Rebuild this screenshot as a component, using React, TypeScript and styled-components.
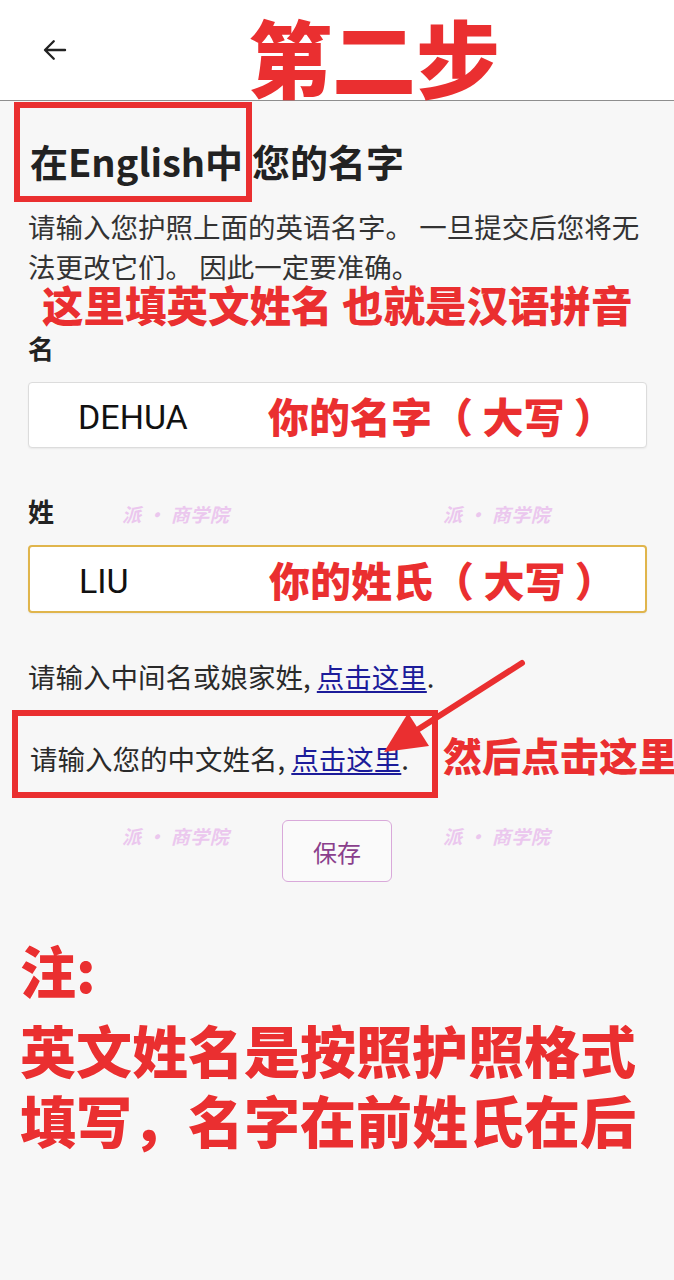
import React from "react";
import styled, { createGlobalStyle } from "styled-components";

const RED = "#ea2f30";

const Global = createGlobalStyle`
  html, body {
    margin: 0;
    padding: 0;
    background: #f7f7f7;
    overflow-x: hidden;
  }
  body {
    font-family: "Noto Sans CJK SC", "Noto Sans", sans-serif;
    color: #2a2a2a;
  }
`;

const Page = styled.div`
  position: relative;
  width: 674px;
  min-height: 1280px;
  overflow: hidden;
  background: #f7f7f7;
`;

const TopBar = styled.header`
  height: 100px;
  background: #ffffff;
  border-bottom: 1px solid #8e8e8e;
  display: flex;
  align-items: center;
  padding-left: 40px;
`;

const BackButton = styled.button`
  border: none;
  background: none;
  padding: 0;
  width: 30px;
  height: 30px;
  display: flex;
  align-items: center;
  justify-content: center;
  color: #222;
`;

const Title = styled.h1`
  margin: 0 0 0 178px;
  padding-top: 12px;
  font-size: 84px;
  line-height: 86px;
  font-weight: 900;
  color: ${RED};
  white-space: nowrap;
`;

const Content = styled.main`
  padding: 0 28px;
  display: flex;
  flex-direction: column;
`;

const Heading = styled.h2`
  margin: 1px 0 0;
  display: flex;
  align-items: stretch;
  font-size: 38px;
  line-height: 46px;
  font-weight: 600;
  color: #222;
`;

const Highlight = styled.span`
  margin-left: -14px;
  border: 6px solid ${RED};
  padding: 30px 3px 12px 10px;
  white-space: nowrap;
`;

const HeadingRest = styled.span`
  padding-top: 36px;
`;

const Intro = styled.p`
  margin: 4px -10px 0 0;
  font-size: 27.5px;
  line-height: 40px;
  color: #333;
`;

const Callout = styled.div<{ $size: number; $indent?: number; $lh?: number }>`
  font-size: ${(p) => p.$size}px;
  line-height: ${(p) => p.$lh ?? p.$size + 1}px;
  font-weight: 900;
  color: ${RED};
  white-space: nowrap;
  margin-left: ${(p) => p.$indent ?? 0}px;
  text-shadow: 0 0 2px #fff;
`;

const Label = styled.div<{ $gap: number }>`
  margin-top: ${(p) => p.$gap}px;
  font-size: 26px;
  line-height: 36px;
  font-weight: 700;
  color: #222;
`;

const Field = styled.div<{ $focused?: boolean }>`
  margin-top: 16px;
  height: ${(p) => (p.$focused ? 68 : 66)}px;
  box-sizing: border-box;
  background: #fff;
  border: ${(p) => (p.$focused ? "2px solid #e0b54c" : "1px solid #dcdcdc")};
  border-radius: 4px;
  box-shadow: 0 1px 2px rgba(0, 0, 0, 0.06);
  display: flex;
  align-items: center;
  padding-left: 49px;
  margin-right: -1px;
`;

const FieldValue = styled.span`
  width: 190px;
  flex-shrink: 0;
  font-family: Roboto, "Noto Sans", sans-serif;
  font-size: 34px;
  color: #111;
  padding-top: 4px;
`;

const FieldNote = styled.span`
  font-size: 41px;
  line-height: 48px;
  font-weight: 900;
  color: ${RED};
  white-space: nowrap;
`;

const Hint = styled.p<{ $gap?: number }>`
  margin: ${(p) => p.$gap ?? 0}px 0 0;
  font-size: 27.5px;
  line-height: 40px;
  color: #2a2a2a;
  white-space: nowrap;
`;

const Link = styled.a`
  color: #1c1c9a;
  text-decoration: underline;
  text-underline-offset: 3px;
`;

const HintRow = styled.div`
  margin-top: 14px;
  display: flex;
  align-items: center;
`;

const HintBox = styled.div`
  margin-left: -16px;
  width: 426px;
  height: 88px;
  box-sizing: border-box;
  border: 6px solid ${RED};
  padding: 22px 0 0 12px;
  flex-shrink: 0;
`;

const SaveRow = styled.div`
  margin-top: 22px;
  display: flex;
  justify-content: center;
`;

const SaveButton = styled.button`
  width: 110px;
  height: 62px;
  background: #fafafa;
  border: 1px solid #d9a9da;
  border-radius: 6px;
  font-family: "Noto Sans CJK SC", sans-serif;
  font-size: 24px;
  color: #8a3f8c;
`;

const Note = styled.section`
  margin: 52px 0 0 -8px;
  color: ${RED};
  font-weight: 900;
  font-size: 56px;
  line-height: 70px;
  text-shadow: 0 0 2px #fff;
`;

const NoteHead = styled.div`
  margin-bottom: 10px;
`;

const NoteLine = styled.div`
  white-space: nowrap;
`;

const Watermark = styled.span<{ $x: number; $y: number }>`
  position: absolute;
  left: ${(p) => p.$x}px;
  top: ${(p) => p.$y}px;
  font-size: 19px;
  font-weight: 700;
  font-style: italic;
  letter-spacing: 0.5px;
  color: #ebc7ee;
  white-space: nowrap;
  pointer-events: none;
`;

const ArrowOverlay = styled.svg`
  position: absolute;
  left: 0;
  top: 0;
  pointer-events: none;
`;

const marks = [
  { x: 122, y: 500 },
  { x: 443, y: 500 },
  { x: 122, y: 822 },
  { x: 443, y: 822 },
];

export default function App() {
  return (
    <Page>
      <Global />
      <TopBar>
        <BackButton aria-label="返回">
          <svg width="30" height="30" viewBox="0 0 24 24" fill="none">
            <path
              d="M20 12H4.5M11 5l-7 7 7 7"
              stroke="#222"
              strokeWidth="1.9"
              strokeLinecap="round"
              strokeLinejoin="round"
            />
          </svg>
        </BackButton>
        <Title>第二步</Title>
      </TopBar>
      <Content>
        <Heading>
          <Highlight>在English中</Highlight>
          <HeadingRest>您的名字</HeadingRest>
        </Heading>
        <Intro>
          请输入您护照上面的英语名字。 一旦提交后您将无法更改它们。 因此一定要准确。
        </Intro>
        <Callout $size={41.5} $indent={14} $lh={36}>
          这里填英文姓名 也就是汉语拼音
        </Callout>
        <Label $gap={8}>名</Label>
        <Field>
          <FieldValue>DEHUA</FieldValue>
          <FieldNote>你的名字（ 大写 ）</FieldNote>
        </Field>
        <Label $gap={45}>姓</Label>
        <Field $focused>
          <FieldValue>LIU</FieldValue>
          <FieldNote>你的姓氏（ 大写 ）</FieldNote>
        </Field>
        <Hint $gap={43}>
          请输入中间名或娘家姓, <Link>点击这里</Link>.
        </Hint>
        <HintRow>
          <HintBox>
            <Hint>
              请输入您的中文姓名, <Link>点击这里</Link>.
            </Hint>
          </HintBox>
          <Callout $size={39} $indent={5}>
            然后点击这里
          </Callout>
        </HintRow>
        <SaveRow>
          <SaveButton>保存</SaveButton>
        </SaveRow>
        <Note>
          <NoteHead>注:</NoteHead>
          <NoteLine>英文姓名是按照护照格式</NoteLine>
          <NoteLine>填写，名字在前姓氏在后</NoteLine>
        </Note>
      </Content>
      {marks.map((m, i) => (
        <Watermark key={i} $x={m.x} $y={m.y}>
          派 · 商学院
        </Watermark>
      ))}
      <ArrowOverlay width="674" height="1280" viewBox="0 0 674 1280">
        <line
          x1="522"
          y1="663"
          x2="414"
          y2="732"
          stroke={RED}
          strokeWidth="6"
          strokeLinecap="round"
        />
        <polygon points="384,752 429,746 408,713" fill={RED} />
      </ArrowOverlay>
    </Page>
  );
}
